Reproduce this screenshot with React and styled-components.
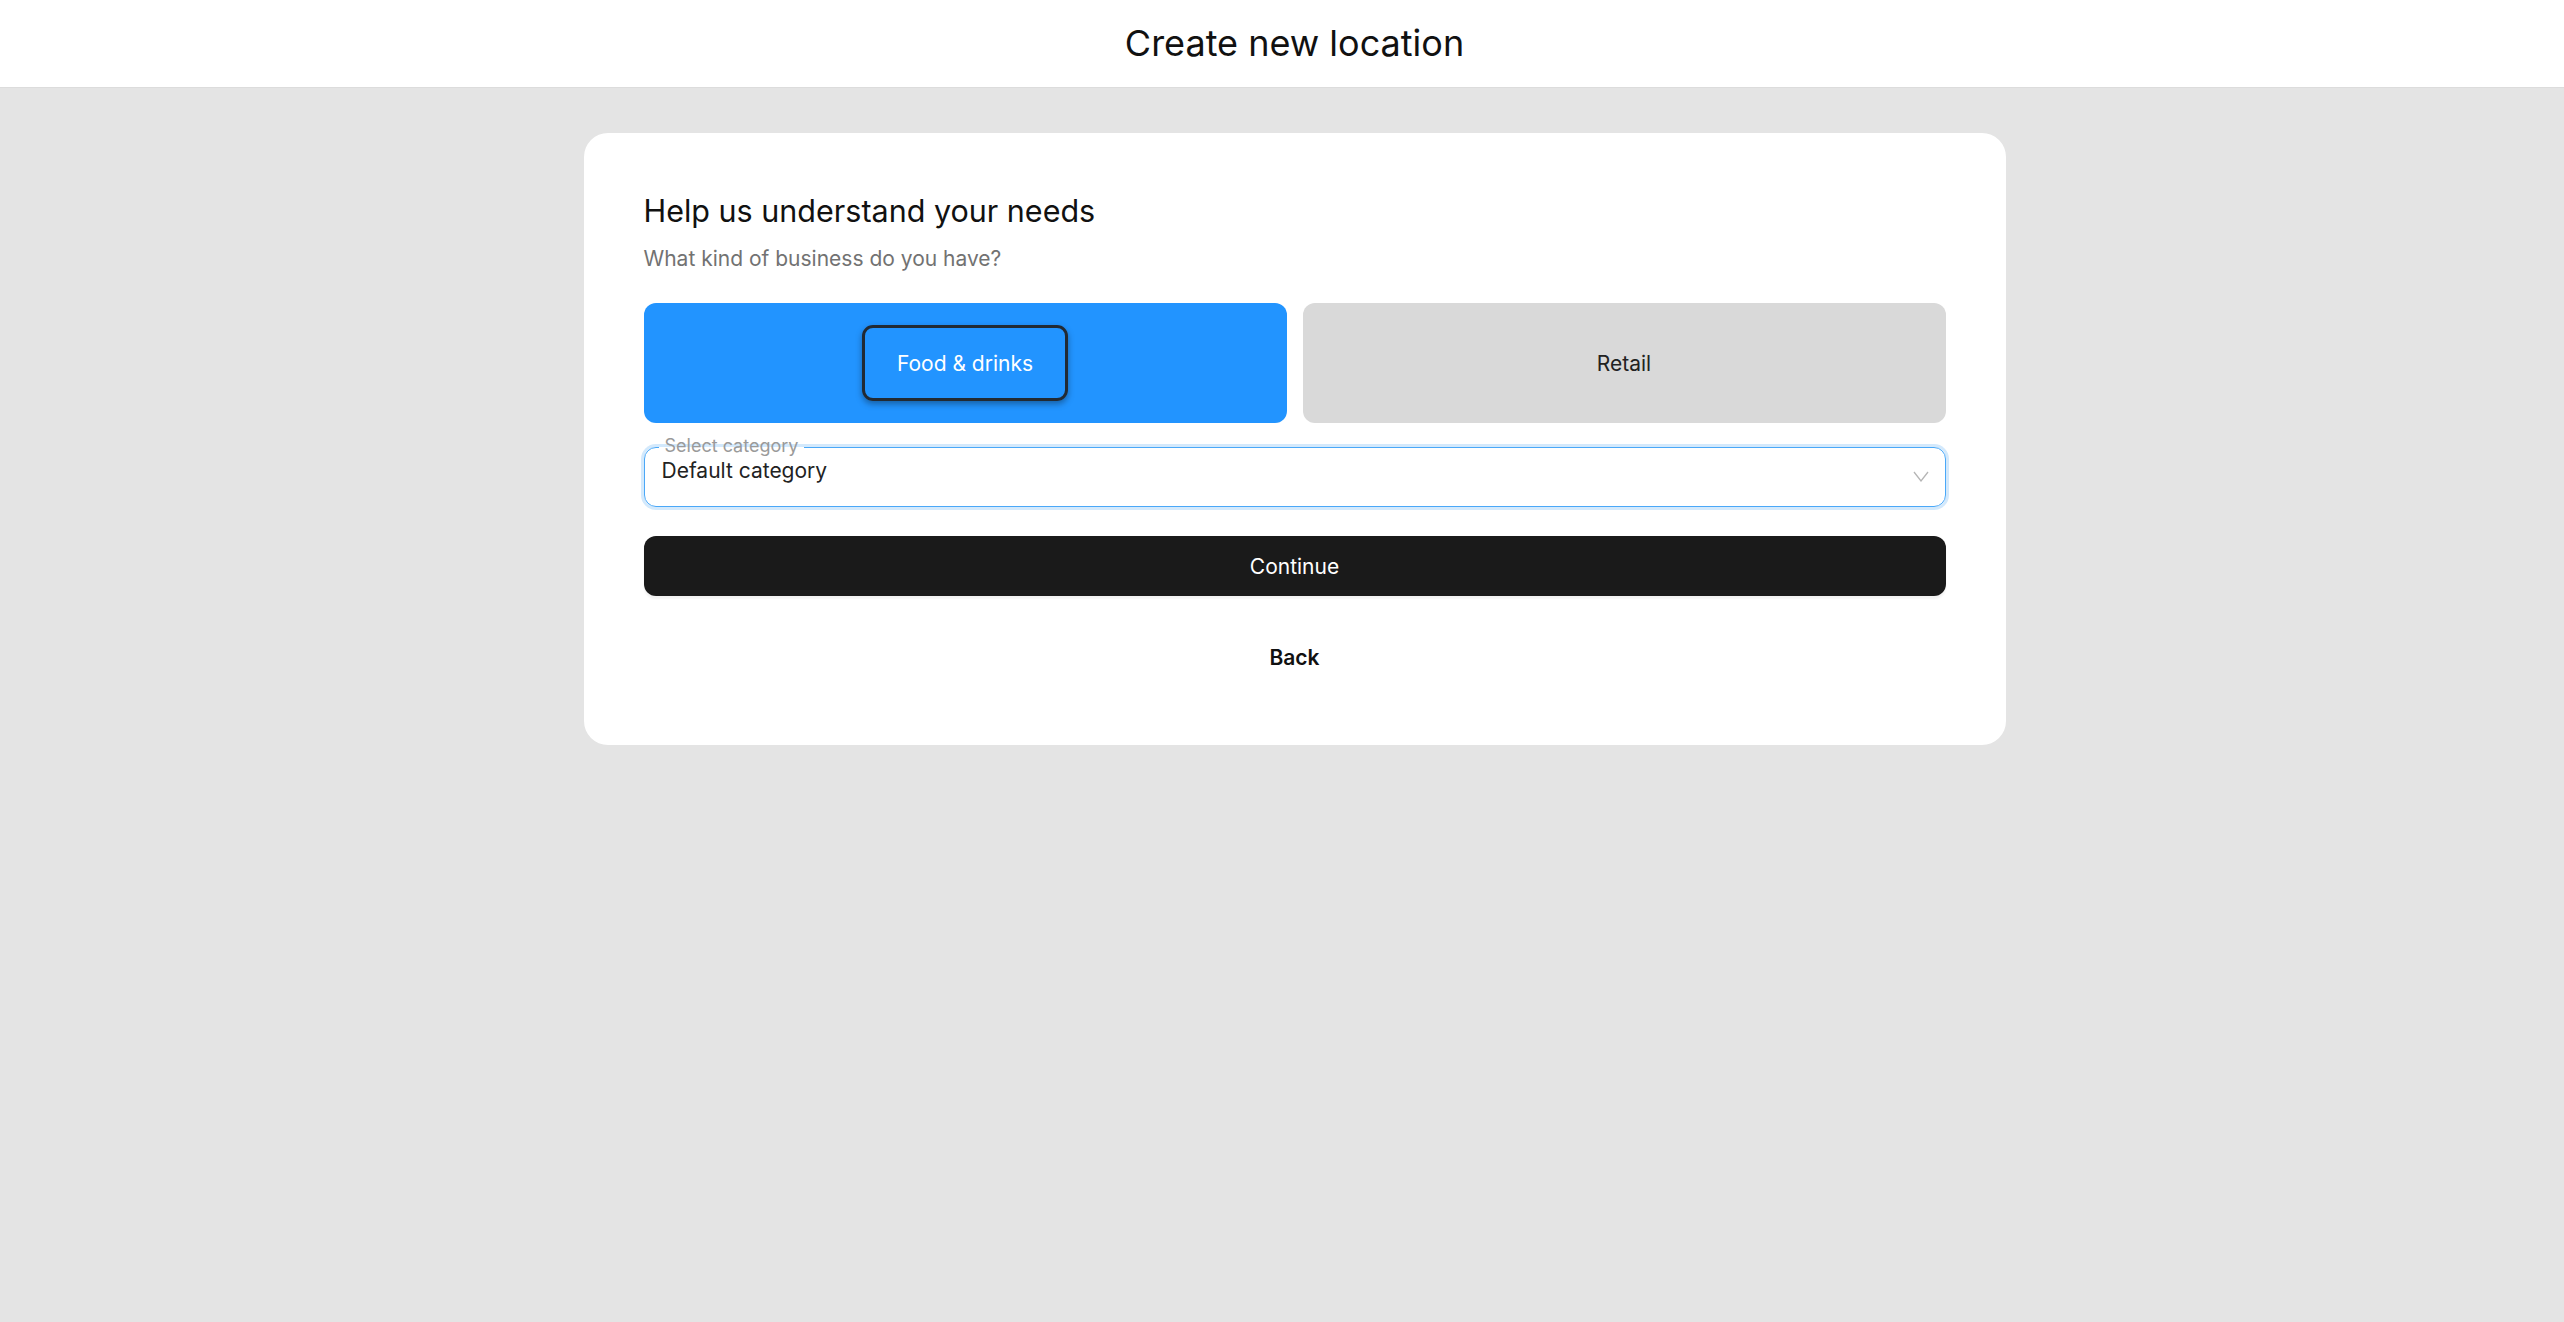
import styled, { createGlobalStyle } from 'styled-components'

const GlobalStyle = createGlobalStyle`
html, body {
    margin: 0;
    padding: 0;
    background: #e4e4e4;
    font-family: Inter, 'Noto Sans', sans-serif;
    color: #1a1a1a;
}
* {
    box-sizing: border-box;
}
`

const Page = styled.div`
min-height: 1322px;
display: flex;
flex-direction: column;
background: #e4e4e4;
`

const Header = styled.header`
height: 88px;
padding-left: 25px;
background: #ffffff;
border-bottom: 1px solid #dcdcdc;
display: flex;
align-items: center;
justify-content: center;
`

const Title = styled.h1`
margin: 0;
font-size: 36px;
line-height: 87px;
font-weight: 400;
color: #111111;
`

const Main = styled.main`
padding: 45px 0 0 25px;
display: flex;
justify-content: center;
`

const Card = styled.section`
width: 1422px;
background: #ffffff;
border-radius: 24px;
padding: 60px 60px 58px;
display: flex;
flex-direction: column;
`

const Heading = styled.h2`
margin: 0;
font-size: 30.5px;
line-height: 36px;
font-weight: 400;
color: #111111;
`

const Subtitle = styled.p`
margin: 17px 0 0;
font-size: 21px;
line-height: 25px;
color: #727272;
`

const Options = styled.div`
margin-top: 32px;
display: grid;
grid-template-columns: 1fr 1fr;
gap: 16px;
`

const Option = styled.button`
height: 120px;
border: none;
border-radius: 12px;
background: ${(p) => (p.$active ? '#2294ff' : '#d9d9d9')};
color: ${(p) => (p.$active ? '#ffffff' : '#222222')};
font-family: inherit;
font-size: 21px;
display: flex;
align-items: center;
justify-content: center;
cursor: pointer;
`

const OptionLabel = styled.span`
display: inline-flex;
align-items: center;
justify-content: center;
height: 76px;
padding: 0 32px;
border-radius: 11px;
border: ${(p) => (p.$focused ? '3px solid #222a33' : '3px solid transparent')};
box-shadow: ${(p) => (p.$focused ? '0 3px 6px rgba(0, 0, 0, 0.35)' : 'none')};
`

const SelectBox = styled.fieldset`
margin: 14px 0 0;
padding: 0 16px 23px 14px;
border: 1px solid #4aa8f8;
border-radius: 12px;
box-shadow: 0 0 0 3px #d3e9fc;
min-width: 0;
`

const SelectLabel = styled.legend`
padding: 0 6px 3px;
font-size: 18px;
line-height: 18px;
color: #9a9a9a;
`

const SelectRow = styled.div`
display: flex;
align-items: flex-start;
justify-content: space-between;
`

const SelectValue = styled.span`
margin-left: 3px;
font-size: 21px;
line-height: 25px;
color: #222222;
`

const Chevron = styled.svg`
margin-top: 13px;
flex-shrink: 0;
`

const PrimaryButton = styled.button`
margin-top: 29px;
height: 60px;
border: none;
border-radius: 12px;
background: #1a1a1a;
color: #ffffff;
font-family: inherit;
font-size: 21px;
font-weight: 400;
box-shadow: 0 3px 2px rgba(0, 0, 0, 0.05);
cursor: pointer;
`

const GhostButton = styled.button`
margin-top: 31px;
height: 60px;
border: none;
background: transparent;
color: #111111;
font-family: inherit;
font-size: 21px;
font-weight: 600;
cursor: pointer;
`

function App() {
    const options = [
        { id: 'food', label: 'Food & drinks', active: true },
        { id: 'retail', label: 'Retail', active: false },
    ]

    return (
        <Page>
            <GlobalStyle />
            <Header>
                <Title>Create new location</Title>
            </Header>
            <Main>
                <Card>
                    <Heading>Help us understand your needs</Heading>
                    <Subtitle>What kind of business do you have?</Subtitle>
                    <Options>
                        {options.map((option) => (
                            <Option key={option.id} $active={option.active}>
                                <OptionLabel $focused={option.active}>{option.label}</OptionLabel>
                            </Option>
                        ))}
                    </Options>
                    <SelectBox>
                        <SelectLabel>Select category</SelectLabel>
                        <SelectRow>
                            <SelectValue>Default category</SelectValue>
                            <Chevron width="16" height="11" viewBox="0 0 16 11">
                                <polyline points="1,1 8,10 15,1" fill="none" stroke="#b5b5b5" strokeWidth="1.3" />
                            </Chevron>
                        </SelectRow>
                    </SelectBox>
                    <PrimaryButton>Continue</PrimaryButton>
                    <GhostButton>Back</GhostButton>
                </Card>
            </Main>
        </Page>
    )
}

export default App
